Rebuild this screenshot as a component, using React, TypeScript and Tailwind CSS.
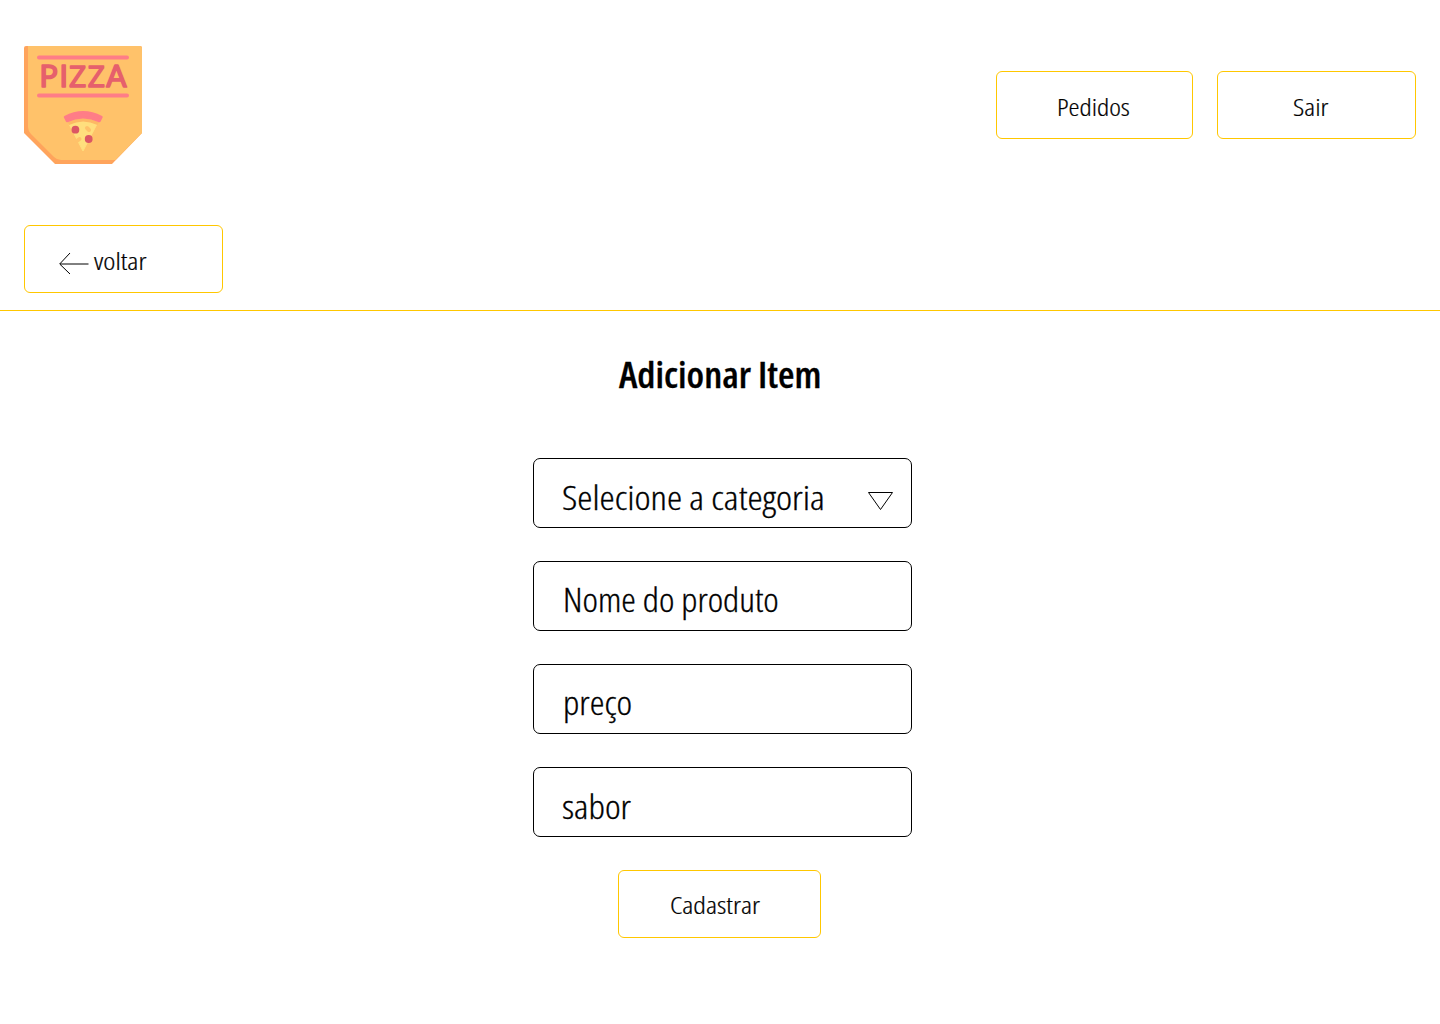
import type { ReactNode } from 'react';

function Logo() {
  return (
    <svg width="118" height="118" viewBox="0 0 118 118" role="img" aria-label="Pizza">
      <path d="M2 0H116Q118 0 118 2V87L88 118H31L0 87V2Q0 0 2 0Z" fill="#ffa45c" />
      <path d="M4 0H116Q118 0 118 2V87L91.500 114H37Q33 114 30 111L7 88Q4 85 4 81Z" fill="#ffc26a" />
      <path d="M15 11.5H103M15 49.5H103" stroke="#ff7d87" strokeWidth="4" strokeLinecap="round" />
      <text
        x="15.4 35.400 44.900 63.700 82.200"
        y="41"
        fontSize="30"
        className="font-['Lato'] font-normal"
        fill="#e6606c"
        stroke="#e6606c"
        strokeWidth="1.6"
        strokeLinejoin="round"
      >
        PI<tspan className="font-['Open_Sans'] [font-stretch:100%]">ZZ</tspan>A
      </text>
      <path d="M45 78Q59 71 73 78L59 105Z" fill="#ffdf7d" stroke="#ffdf7d" strokeWidth="1" strokeLinejoin="round" />
      <path d="M44 76Q59 69 75 76L73.500 79Q59 72 45 79Z" fill="#fdb964" />
      <path d="M41 71Q59 61.500 77.500 71L75.500 75Q59 67.500 43 75Z" fill="#ff7d87" stroke="#ff7d87" strokeWidth="2.500" strokeLinejoin="round" />
      <path d="M63 82L65 84M53.500 94.500L55.500 93" stroke="#ffc26a" strokeWidth="4" strokeLinecap="round" />
      <circle cx="51.400" cy="83.700" r="3.900" fill="#dc5764" />
      <circle cx="64.700" cy="93" r="3.900" fill="#dc5764" />
    </svg>
  );
}

function Label({ className, children }: { className: string; children: ReactNode }) {
  return <span className={`inline-block origin-left whitespace-nowrap ${className}`}>{children}</span>;
}

function Button({ className, children }: { className: string; children: ReactNode }) {
  return (
    <button className={`flex h-[68px] items-center rounded-md border border-[#ffc700] text-2xl font-light [-webkit-text-stroke:0.2px_black] ${className}`}>
      {children}
    </button>
  );
}

function Field({ className, children }: { className: string; children: ReactNode }) {
  return (
    <div className={`flex h-[70px] w-[379px] items-center rounded-[7px] border border-black text-[33px] font-light [-webkit-text-stroke:0.3px_black] ${className}`}>
      {children}
    </div>
  );
}

export default function App() {
  return (
    <div className="flex min-h-screen flex-col bg-white font-['Open_Sans',sans-serif] text-black [font-stretch:75%]">
      <header className="flex h-[311px] flex-col items-start border-b border-[#ffc700] px-6 pt-[46px]">
        <div className="flex w-full items-start justify-between">
          <Logo />
          <nav className="mt-[25px] flex gap-6">
            <Button className="w-[197px] pt-[3px] pl-[60px]"><Label className="scale-x-[1.16]">Pedidos</Label></Button>
            <Button className="w-[199px] pt-[3px] pl-[75px]"><Label className="scale-x-[1.18]">Sair</Label></Button>
          </nav>
        </div>
        <Button className="mt-[61px] w-[199px] gap-1 pt-[3px] pl-[34px]">
          <svg width="31" height="24" viewBox="0 0 31 24" fill="none" stroke="black" className="mt-[7px]">
            <path d="M29.500 12H1M11 1L0.700 12L11 22" />
          </svg>
          <Label className="scale-x-[1.205]">voltar</Label>
        </Button>
      </header>
      <main className="flex flex-col items-center">
        <h1 className="mt-[39px] h-[108px] text-4xl leading-[49px] font-semibold whitespace-nowrap [-webkit-text-stroke:0.3px_black]">
          <span className="inline-block scale-x-[1.052]">Adicionar Item</span>
        </h1>
        <form className="ml-[5px] flex flex-col gap-[33px]">
          <Field className="justify-between pt-2.5 pr-[18px] pl-7">
            <Label className="scale-x-[1.165]">Selecione a categoria</Label>
            <svg width="26" height="20" viewBox="0 0 26 20" fill="none" stroke="black" className="mt-[5px]">
              <path d="M1.500 1.500H25.500L13.500 18.500Z" />
            </svg>
          </Field>
          <Field className="pt-2 pl-[29px]"><Label className="scale-x-[1.117]">Nome do produto</Label></Field>
          <Field className="pt-2 pl-[29px]"><Label className="scale-x-[1.13]">preço</Label></Field>
          <Field className="pt-2.5 pl-7"><Label className="scale-x-[1.135]">sabor</Label></Field>
          <Button className="ml-[85px] w-[203px] pt-px pl-[51px]"><Label className="scale-x-[1.2]">Cadastrar</Label></Button>
        </form>
      </main>
    </div>
  );
}
